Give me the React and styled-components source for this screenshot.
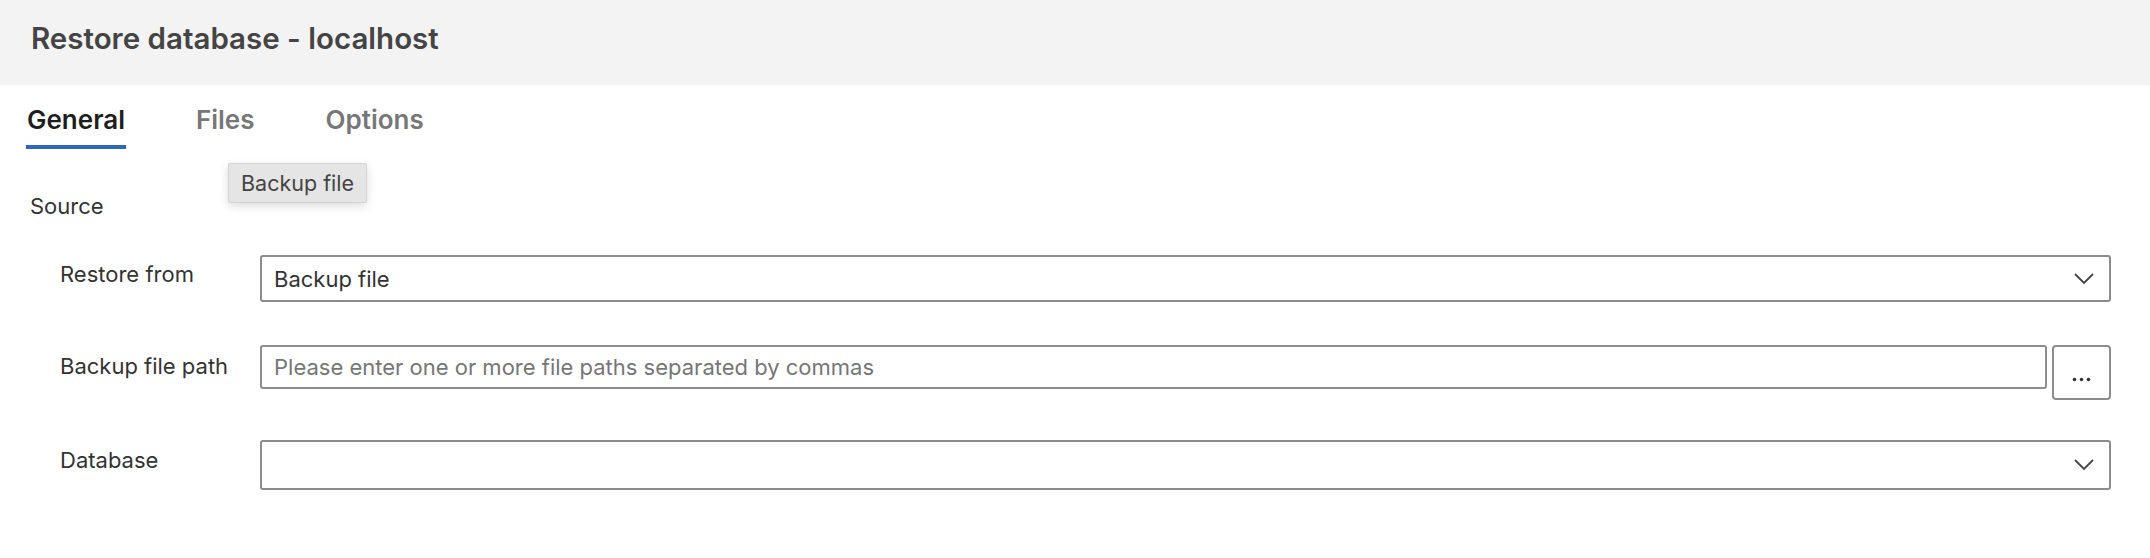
import React from 'react'
import styled, { createGlobalStyle } from 'styled-components'

const GlobalStyle = createGlobalStyle`
	html, body {
		margin: 0;
		padding: 0;
		background: #ffffff;
		font-family: 'Inter', 'Noto Sans', sans-serif;
		color: #333333;
	}
`

const Page = styled.div`
	position: relative;
	width: 2150px;
	height: 558px;
	overflow: hidden;
	background: #ffffff;
`

const Header = styled.div`
	height: 85px;
	background: #f3f3f3;
	display: flex;
	align-items: center;
	padding-left: 31px;
	padding-bottom: 10px;
	box-sizing: border-box;
	font-size: 29.5px;
	font-weight: 600;
	color: #444444;
`

const TabBar = styled.div`
	display: flex;
	gap: 69px;
	padding: 19px 0 0 26px;
`

const Tab = styled.div`
	font-size: 26px;
	font-weight: 600;
	line-height: 32px;
	color: ${(p) => (p.active ? '#1e1e1e' : '#777777')};
	padding: 0 1px 9px;
	border-bottom: 4px solid ${(p) => (p.active ? '#3068c0' : 'transparent')};
`

const Body = styled.div`
	padding: 44px 39px 0 30px;
`

const SectionTitle = styled.div`
	font-size: 22px;
	color: #333333;
	margin-bottom: 36px;
`

const Rows = styled.div`
	display: flex;
	flex-direction: column;
	padding-left: 30px;
`

const Row = styled.div`
	display: grid;
	grid-template-columns: 200px 1fr;
	align-items: start;
	margin-bottom: ${(p) => p.gap || 0}px;
`

const Label = styled.div`
	font-size: 22px;
	line-height: 27px;
	color: #333333;
	padding-top: ${(p) => p.offset || 8}px;
`

const Select = styled.div`
	height: ${(p) => p.h || 47}px;
	box-sizing: border-box;
	border: 2px solid #8c8c8c;
	border-radius: 3px;
	display: flex;
	align-items: center;
	justify-content: space-between;
	padding: 0 15px 0 12px;
	font-size: 22px;
	color: #333333;
`

const PathGroup = styled.div`
	display: flex;
	gap: 5px;
	align-items: flex-start;
`

const PathInput = styled.div`
	flex: 1;
	height: 44px;
	box-sizing: border-box;
	border: 2px solid #8c8c8c;
	border-radius: 3px;
	display: flex;
	align-items: center;
	padding-left: 12px;
	font-size: 22px;
	color: #767676;
`

const BrowseButton = styled.div`
	width: 59px;
	height: 55px;
	box-sizing: border-box;
	border: 2px solid #8c8c8c;
	border-radius: 4px;
	display: flex;
	align-items: center;
	justify-content: center;
	padding-top: 14px;
`

const Tooltip = styled.div`
	position: absolute;
	left: 228px;
	top: 163px;
	height: 40px;
	padding: 0 12px;
	box-sizing: border-box;
	display: flex;
	align-items: center;
	background: #e5e5e5;
	border: 1px solid #d2d2d2;
	border-radius: 2px;
	box-shadow: 0 3px 10px rgba(0, 0, 0, 0.14);
	font-size: 21.5px;
	color: #444444;
`

const Chevron = () => (
	<svg width='20' height='12' viewBox='0 0 20 12' fill='none'>
		<path d='M1 1 L10 10 L19 1' stroke='#444' strokeWidth='1.8' />
	</svg>
)

const Dots = () => (
	<svg width='19' height='5' viewBox='0 0 19 5'>
		<circle cx='2.5' cy='2.5' r='1.8' fill='#333' />
		<circle cx='9.5' cy='2.5' r='1.8' fill='#333' />
		<circle cx='16.5' cy='2.5' r='1.8' fill='#333' />
	</svg>
)

const App = () => {
	return (
		<Page>
			<GlobalStyle />
			<Header>Restore database - localhost</Header>
			<TabBar>
				<Tab active>General</Tab>
				<Tab>Files</Tab>
				<Tab>Options</Tab>
			</TabBar>
			<Body>
				<SectionTitle>Source</SectionTitle>
				<Rows>
					<Row gap={43}>
						<Label offset={6}>Restore from</Label>
						<Select>
							<span>Backup file</span>
							<Chevron />
						</Select>
					</Row>
					<Row gap={40}>
						<Label offset={8}>Backup file path</Label>
						<PathGroup>
							<PathInput>Please enter one or more file paths separated by commas</PathInput>
							<BrowseButton>
								<Dots />
							</BrowseButton>
						</PathGroup>
					</Row>
					<Row>
						<Label offset={7}>Database</Label>
						<Select h={50}>
							<span />
							<Chevron />
						</Select>
					</Row>
				</Rows>
			</Body>
			<Tooltip>Backup file</Tooltip>
		</Page>
	)
}

export default App
